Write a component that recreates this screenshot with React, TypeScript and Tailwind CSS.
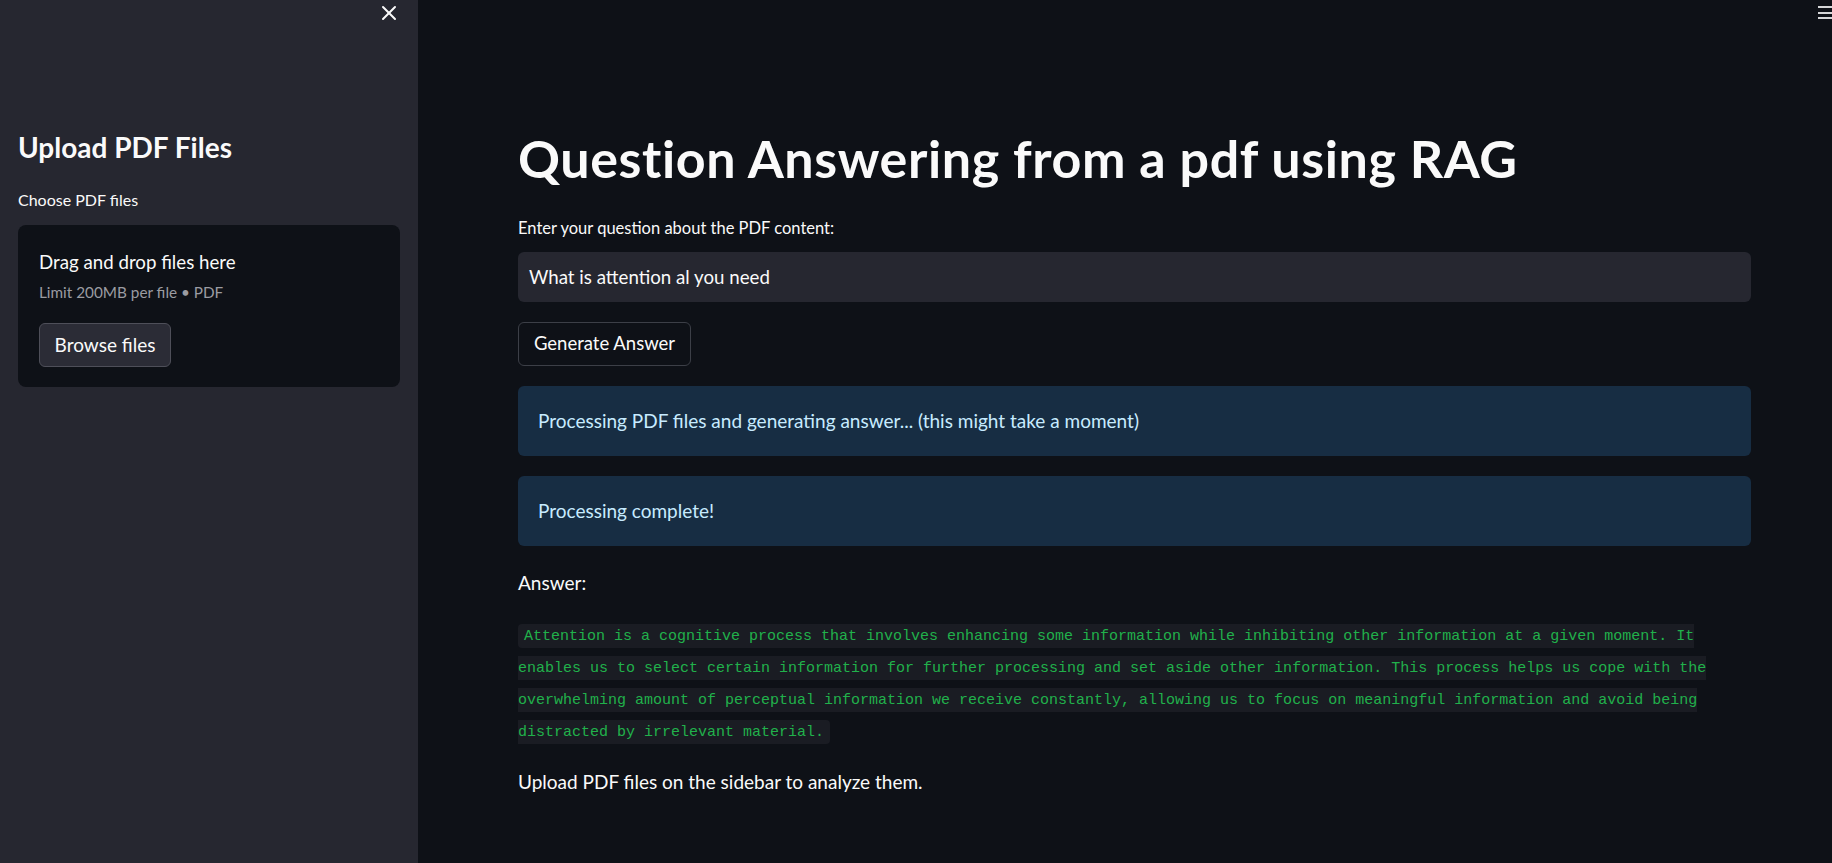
import { X } from "lucide-react";

const sans = "font-['Lato','Liberation_Sans',sans-serif]";

function Sidebar() {
  return (
    <aside className="relative w-[418px] shrink-0 bg-[#262730] px-[18px] pt-[122px] text-[#fafafa]">
      {/* close */}
      <button className="absolute left-[377px] top-[1px] flex h-6 w-6 items-center justify-center text-[#fafafa]">
        <X className="h-6 w-6" strokeWidth={2} />
      </button>

      <h2 className="text-[28px] font-bold leading-[50px]">Upload PDF Files</h2>
      <div className="mt-[16px] text-[16px] leading-[24px]">Choose PDF files</div>

      {/* dropzone */}
      <div className="mt-[13px] h-[162px] rounded-[8px] bg-[#0e1117] px-[21px] pt-[22px]">
        <div className="text-[18.7px] leading-[30px]">Drag and drop files here</div>
        <div className="mt-[3px] text-[15.3px] leading-[24px] text-[#9b9ca2]">Limit 200MB per file • PDF</div>
        <button className="mt-[19px] h-[44px] w-[132px] rounded-[6px] border border-[#4e4f59] bg-[#2b2c36] text-[19px] text-[#fafafa]">
          Browse files
        </button>
      </div>
    </aside>
  );
}

function InfoBox({ children }: { children: React.ReactNode }) {
  return (
    <div className="flex h-[70px] items-center rounded-[6px] bg-[#172d43] px-[20px] text-[19px] text-[#c7ebff]">
      {children}
    </div>
  );
}

export default function App() {
  const answer =
    "Attention is a cognitive process that involves enhancing some information while inhibiting other information at a given moment. It enables us to select certain information for further processing and set aside other information. This process helps us cope with the overwhelming amount of perceptual information we receive constantly, allowing us to focus on meaningful information and avoid being distracted by irrelevant material.";

  return (
    <div className={`relative flex h-[863px] w-[1832px] overflow-hidden bg-[#0e1117] ${sans}`}>
      <Sidebar />

      <main className="flex-1 pl-[100px] pt-[125px] text-[#fafafa]">
        <div className="w-[1233px]">
          <h1 className="text-[52px] font-bold leading-[66px] tracking-[0.6px]">
            Question Answering from a pdf using RAG
          </h1>

          <label className="mt-[25px] block text-[16.5px] leading-[24px]">
            Enter your question about the PDF content:
          </label>
          <div className="mt-[12px] flex h-[50px] items-center rounded-[6px] bg-[#262730] px-[11px] text-[18.7px]">
            What is attention al you need
          </div>

          <button className="mt-[20px] h-[44px] w-[173px] rounded-[6px] border border-[#3c3f47] bg-[#0e1117] text-[18.5px]">
            Generate Answer
          </button>

          <div className="mt-[20px] flex flex-col gap-[20px]">
            <InfoBox>Processing PDF files and generating answer... (this might take a moment)</InfoBox>
            <InfoBox>Processing complete!</InfoBox>
          </div>

          <div className="mt-[24px] text-[19px] leading-[26px]">Answer:</div>

          <p className="mt-[24.5px] font-['Liberation_Mono',monospace] text-[15px] leading-[32px]">
            <code className="rounded-[4px] bg-[#1a1c23] px-[6px] py-[3.5px] text-[#21b14b]">{answer}</code>
          </p>

          <div className="mt-[18px] text-[19px] leading-[30px]">Upload PDF files on the sidebar to analyze them.</div>
        </div>
      </main>

      {/* main menu, clipped at the edge */}
      <div className="absolute right-[-4px] top-[6px] flex w-[18px] flex-col gap-[3.5px]">
        <span className="h-[2px] w-full bg-[#d5d6d8]" />
        <span className="h-[2px] w-full bg-[#d5d6d8]" />
        <span className="h-[2px] w-full bg-[#d5d6d8]" />
      </div>
    </div>
  );
}
